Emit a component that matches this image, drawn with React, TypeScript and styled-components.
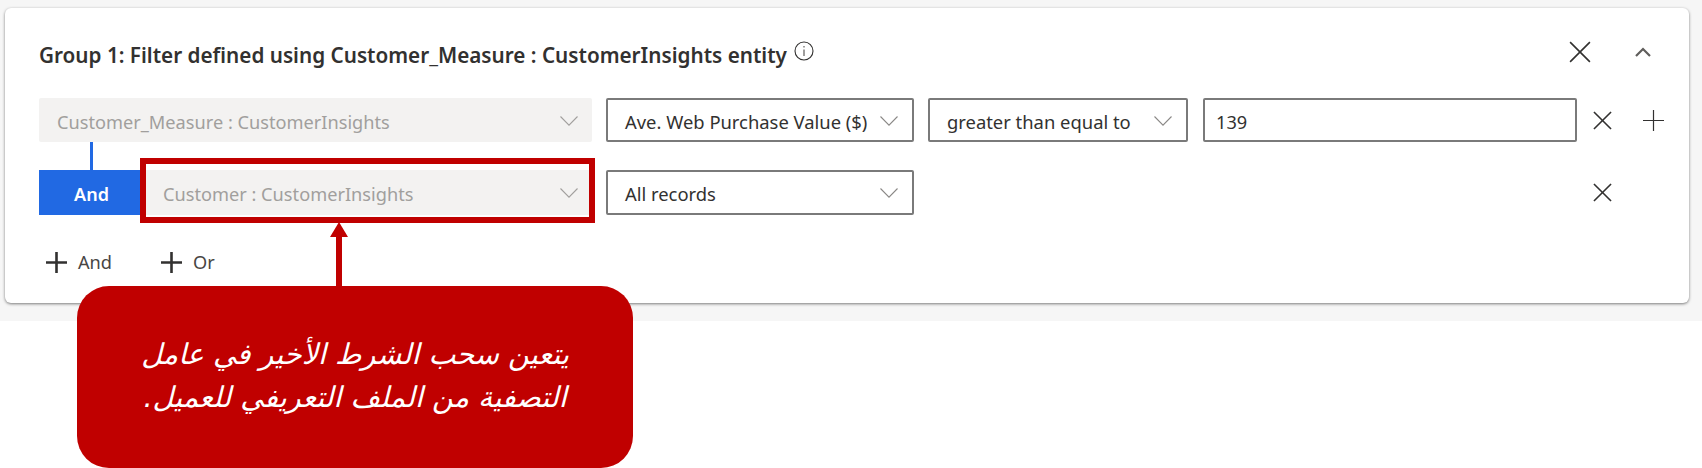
import React from "react";
import styled, { createGlobalStyle } from "styled-components";

const Global = createGlobalStyle`
  html, body { margin: 0; padding: 0; background: #fff; }
  body { font-family: "Noto Sans", "Open Sans", "Liberation Sans", sans-serif; }
`;

const Page = styled.div`
  position: relative;
  width: 1702px;
  height: 468px;
  overflow: hidden;
  background: #fff;
`;

const Band = styled.div`
  box-sizing: border-box;
  height: 321px;
  padding: 8px 13px 18px 5px;
  background: #f6f6f6;
`;

const Card = styled.section`
  box-sizing: border-box;
  height: 295px;
  padding: 0 0 0 34px;
  background: #fff;
  border-radius: 6px;
  box-shadow: 0 1px 3px rgba(0, 0, 0, 0.5);
  display: flex;
  flex-direction: column;
`;

const TitleRow = styled.header`
  height: 90px;
  display: flex;
  align-items: flex-start;
`;

const Title = styled.h2`
  margin: 32px 0 0;
  font-size: 20.7px;
  line-height: 30px;
  font-weight: 600;
  color: #323130;
  white-space: nowrap;
`;

const InfoIcon = styled.svg`
  margin: 33px 0 0 7px;
  width: 20px;
  height: 20px;
`;

const HeaderActions = styled.div`
  margin-left: auto;
  padding: 33px 38px 0 0;
  display: flex;
  align-items: center;
  gap: 44px;
`;

const Row = styled.div<{ $mt?: number; $h?: number }>`
  display: flex;
  align-items: stretch;
  height: ${(p) => p.$h ?? 44}px;
  margin-top: ${(p) => p.$mt ?? 0}px;
`;

const Select = styled.div<{ $w: number; $disabled?: boolean; $ml?: number; $pl?: number; $pr?: number; $pt?: number }>`
  box-sizing: border-box;
  width: ${(p) => p.$w}px;
  margin-left: ${(p) => p.$ml ?? 0}px;
  padding: ${(p) => p.$pt ?? 3}px ${(p) => p.$pr ?? 14}px 0 ${(p) => p.$pl ?? 17}px;
  display: flex;
  align-items: center;
  justify-content: space-between;
  font-size: ${(p) => (p.$disabled ? 18.2 : 18.4)}px;
  white-space: nowrap;
  border-radius: 2px;
  color: ${(p) => (p.$disabled ? "#a19f9d" : "#323130")};
  background: ${(p) => (p.$disabled ? "#f3f2f1" : "#fff")};
  border: ${(p) => (p.$disabled ? "0" : "2px solid #7a7a7a")};
`;

const ValueInput = styled.div`
  box-sizing: border-box;
  width: 374px;
  margin-left: 15px;
  padding: 3px 11px 0;
  display: flex;
  align-items: center;
  font-size: 18.2px;
  color: #323130;
  background: #fff;
  border: 2px solid #7a7a7a;
  border-radius: 2px;
`;

const AndTag = styled.div`
  position: relative;
  width: 105px;
  flex: none;
  padding-top: 2px;
  box-sizing: border-box;
  display: flex;
  align-items: center;
  justify-content: center;
  font-size: 18px;
  font-weight: 600;
  color: #fff;
  background: #2169e3;
  &::before {
    content: "";
    position: absolute;
    left: 51px;
    top: -28px;
    width: 3px;
    height: 28px;
    background: #2169e3;
  }
`;

const RowAction = styled.div<{ $ml: number }>`
  margin-left: ${(p) => p.$ml}px;
  display: flex;
  align-items: center;
`;

const AddRow = styled.div`
  margin-top: 35px;
  display: flex;
  align-items: center;
  gap: 49px;
  padding-left: 7px;
`;

const AddButton = styled.div`
  display: flex;
  align-items: center;
  gap: 11px;
  font-size: 18.2px;
  color: #484644;
`;

const Highlight = styled.div`
  position: absolute;
  left: 140px;
  top: 158px;
  width: 455px;
  height: 65px;
  box-sizing: border-box;
  border: 6px solid #c00000;
`;

const ArrowShaft = styled.div`
  position: absolute;
  left: 336px;
  top: 236px;
  width: 6px;
  height: 52px;
  background: #c00000;
`;

const ArrowHead = styled.div`
  position: absolute;
  left: 330px;
  top: 222px;
  width: 0;
  height: 0;
  border-left: 9px solid transparent;
  border-right: 9px solid transparent;
  border-bottom: 15px solid #c00000;
`;

const Callout = styled.div`
  position: absolute;
  left: 77px;
  top: 286px;
  width: 556px;
  height: 182px;
  box-sizing: border-box;
  padding-top: 47px;
  background: #c00000;
  border-radius: 32px;
  color: #fff;
  text-align: center;
  font-family: "DejaVu Sans", sans-serif;
  font-style: italic;
  font-size: 28.6px;
  line-height: 43px;
`;

const CalloutLine = styled.div`
  white-space: nowrap;
`;

const Stroke = styled.svg`
  display: block;
  flex: none;
  overflow: visible;
`;

const ChevronWrap = styled.span`
  display: block;
  flex: none;
  margin-top: -1px;
`;

const Cross = ({ size, width = 1.6 }: { size: number; width?: number }) => (
  <Stroke width={size} height={size} viewBox="0 0 20 20">
    <path d="M1 1 19 19M19 1 1 19" fill="none" stroke="#323130" strokeWidth={(width * 20) / size} />
  </Stroke>
);

const Plus = ({ size, width = 1.5, color = "#323130" }: { size: number; width?: number; color?: string }) => (
  <Stroke width={size} height={size} viewBox="0 0 20 20">
    <path d="M10 0V20M0 10H20" fill="none" stroke={color} strokeWidth={(width * 20) / size} />
  </Stroke>
);

const ChevronDown = ({ color = "#8a8886" }: { color?: string }) => (
  <ChevronWrap>
    <Stroke width={18} height={10} viewBox="0 0 18 10">
      <path d="M.5.5 9 9.2 17.5.5" fill="none" stroke={color} strokeWidth={1.1} />
    </Stroke>
  </ChevronWrap>
);

const ChevronUp = () => (
  <Stroke width={16} height={10} viewBox="0 0 16 10">
    <path d="M1 9 8 2l7 7" fill="none" stroke="#605e5c" strokeWidth={2.2} />
  </Stroke>
);

export default function App() {
  return (
    <>
      <Global />
      <Page>
        <Band>
          <Card>
            <TitleRow>
              <Title>Group 1: Filter defined using Customer_Measure : CustomerInsights entity</Title>
              <InfoIcon viewBox="0 0 20 20">
                <circle cx="10" cy="10" r="9" fill="none" stroke="#323130" strokeWidth="1.1" />
                <path d="M10 8.5V15M10 5V6.5" fill="none" stroke="#605e5c" strokeWidth="1.2" />
              </InfoIcon>
              <HeaderActions>
                <Cross size={22} />
                <ChevronUp />
              </HeaderActions>
            </TitleRow>
            <Row>
              <Select $w={553} $disabled $pl={18} $pr={14}>
                Customer_Measure : CustomerInsights
                <ChevronDown color="#a19f9d" />
              </Select>
              <Select $w={308} $ml={14} $pr={14}>
                Ave. Web Purchase Value ($)
                <ChevronDown />
              </Select>
              <Select $w={260} $ml={14}>
                greater than equal to
                <ChevronDown />
              </Select>
              <ValueInput>139</ValueInput>
              <RowAction $ml={16}>
                <Cross size={19} />
              </RowAction>
              <RowAction $ml={31}>
                <Plus size={21} width={1.2} />
              </RowAction>
            </Row>
            <Row $mt={28} $h={45}>
              <AndTag>And</AndTag>
              <Select $w={448} $disabled $pl={19} $pr={14} $pt={2}>
                Customer : CustomerInsights
                <ChevronDown color="#a19f9d" />
              </Select>
              <Select $w={308} $ml={14} $pr={14} $pt={1}>
                All records
                <ChevronDown />
              </Select>
              <RowAction $ml={679}>
                <Cross size={19} />
              </RowAction>
            </Row>
            <AddRow>
              <AddButton>
                <Plus size={21} width={2.6} />
                And
              </AddButton>
              <AddButton>
                <Plus size={21} width={2.6} />
                Or
              </AddButton>
            </AddRow>
          </Card>
        </Band>
        <Highlight />
        <ArrowHead />
        <ArrowShaft />
        <Callout dir="rtl" lang="ar">
          <CalloutLine>يتعين سحب الشرط الأخير في عامل</CalloutLine>
          <CalloutLine>التصفية من الملف التعريفي للعميل.</CalloutLine>
        </Callout>
      </Page>
    </>
  );
}
